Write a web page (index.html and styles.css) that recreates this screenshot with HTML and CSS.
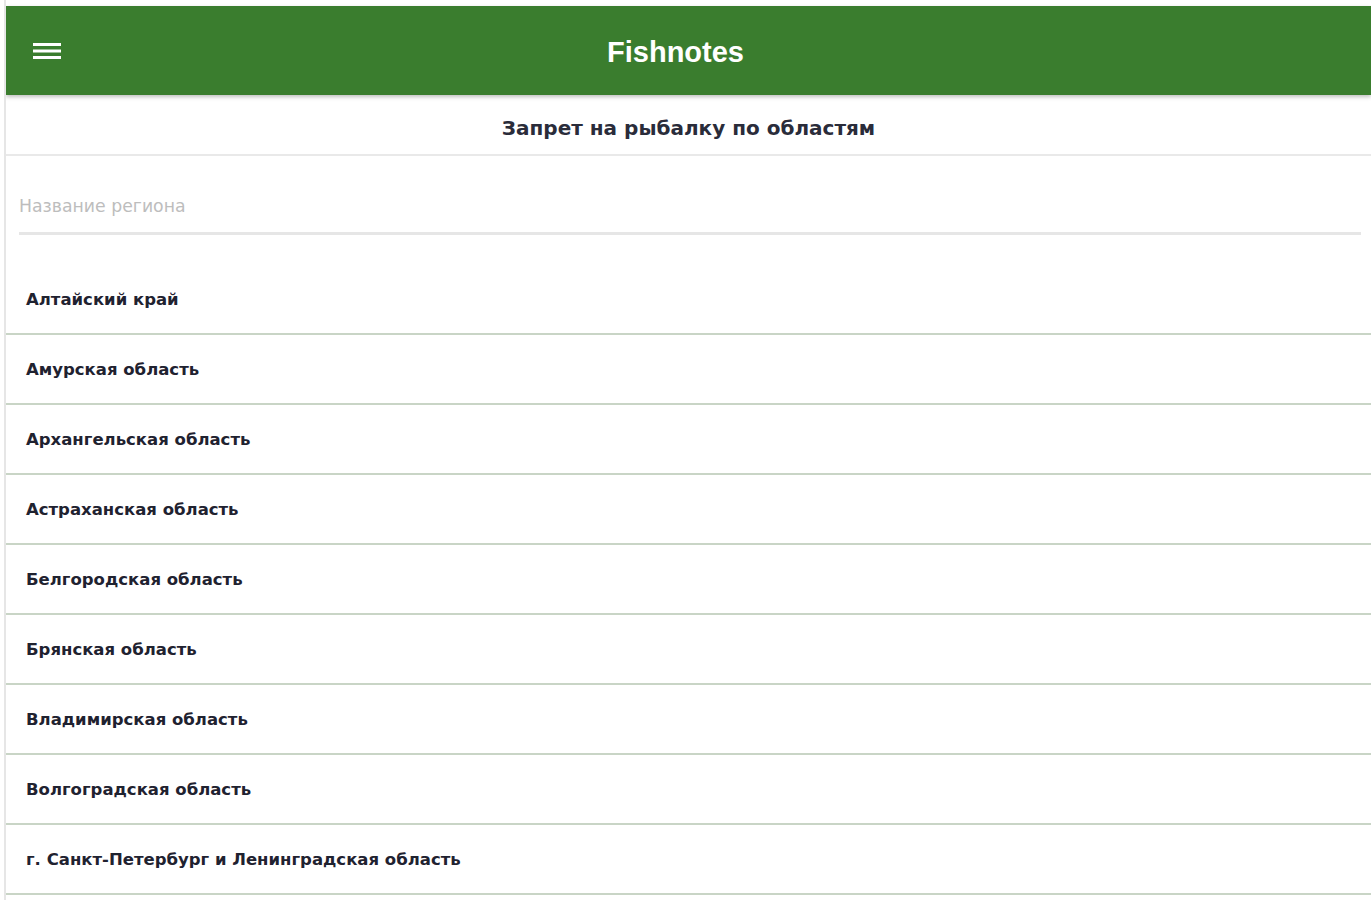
FILE: index.html
```html
<!DOCTYPE html>
<html lang="ru">
<head>
<meta charset="utf-8">
<title>Fishnotes</title>
<link rel="stylesheet" href="styles.css">
</head>
<body>
<div class="app">
  <header class="toolbar">
    <button class="menu-btn" aria-label="menu">
      <svg width="28" height="20" viewBox="0 0 28 20"><rect x="0" y="2" width="28" height="3" fill="#fff"/><rect x="0" y="8.5" width="28" height="3" fill="#fff"/><rect x="0" y="15" width="28" height="3" fill="#fff"/></svg>
    </button>
    <h1 class="brand">Fishnotes</h1>
    <div class="spacer"></div>
  </header>
  <div class="subtitle">Запрет на рыбалку по областям</div>
  <div class="search">
    <input class="search-input" type="text" placeholder="Название региона">
  </div>
  <ul class="regions">
    <li class="region">Алтайский край</li>
    <li class="region">Амурская область</li>
    <li class="region">Архангельская область</li>
    <li class="region">Астраханская область</li>
    <li class="region">Белгородская область</li>
    <li class="region">Брянская область</li>
    <li class="region">Владимирская область</li>
    <li class="region">Волгоградская область</li>
    <li class="region">г. Санкт-Петербург и Ленинградская область</li>
  </ul>
</div>
</body>
</html>
```

FILE: styles.css
```css
html, body {
  margin: 0;
  padding: 0;
  background: #fff;
  overflow: hidden;
}
body {
  font-family: "Liberation Sans", Arial, sans-serif;
  color: #1f2230;
}
.app {
  margin-left: 4px;
  padding-top: 6px;
  border-left: 2px solid #e6e6e6;
  height: 894px;
  overflow: hidden;
}
.toolbar {
  display: flex;
  align-items: center;
  height: 89px;
  background: #3a7d2e;
  box-shadow: 0 2px 4px rgba(0,0,0,0.25);
  position: relative;
  z-index: 1;
}
.menu-btn {
  background: none;
  border: 0;
  padding: 0;
  margin-left: 27px;
  width: 28px;
  height: 20px;
  display: flex;
}
.brand {
  flex: 1;
  margin: 0;
  padding-top: 3px;
  text-align: center;
  color: #fff;
  font-size: 29px;
  font-weight: bold;
}
.spacer {
  width: 81px;
}
.subtitle {
  height: 53px;
  padding-top: 6px;
  display: flex;
  align-items: center;
  justify-content: center;
  font-family: "DejaVu Sans", Verdana, sans-serif;
  font-size: 20px;
  font-weight: bold;
  color: #2a2c3a;
  border-bottom: 2px solid #e9e9e9;
}
.search {
  padding: 31px 10px 0 13px;
}
.search-input {
  display: block;
  width: 100%;
  box-sizing: border-box;
  border: 0;
  border-bottom: 3px solid #e6e6e6;
  outline: none;
  font-family: "DejaVu Sans", Verdana, sans-serif;
  font-size: 17.3px;
  padding: 9px 0 16px 0;
  color: #333;
  background: transparent;
}
.search-input::placeholder {
  color: #bdbdbd;
}
.regions {
  list-style: none;
  margin: 30px 0 0 0;
  padding: 0;
}
.region {
  height: 68px;
  display: flex;
  align-items: center;
  padding-left: 20px;
  border-bottom: 2px solid #c9d5c6;
  font-family: "DejaVu Sans", Verdana, sans-serif;
  font-size: 16.5px;
  font-weight: bold;
  color: #1f2230;
}
```
